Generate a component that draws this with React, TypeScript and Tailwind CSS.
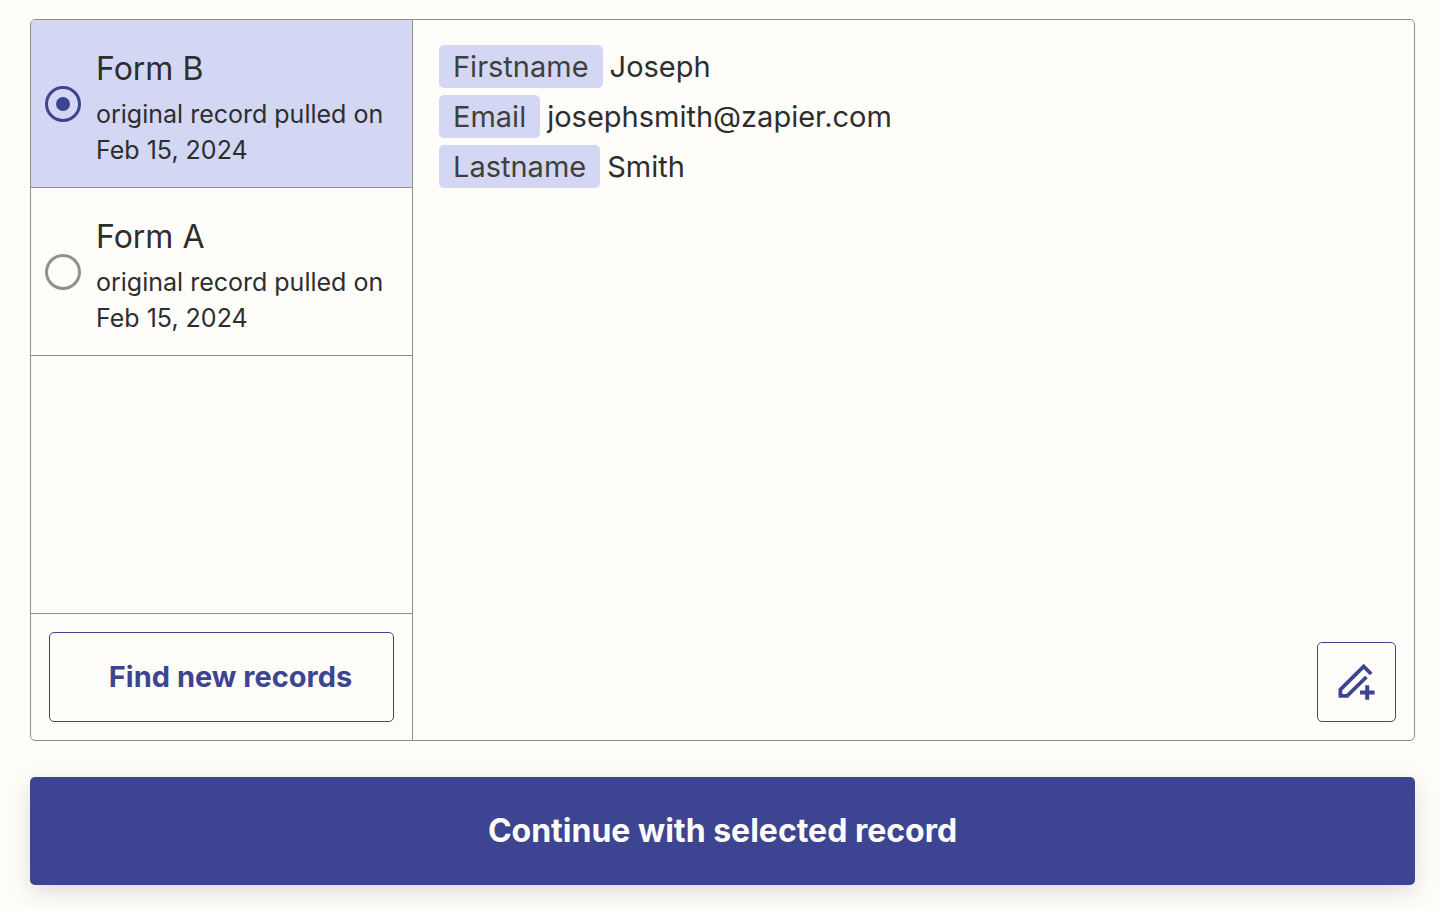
import { useState } from "react";

const records = [
  { id: "form-b", name: "Form B", note: "original record pulled on Feb 15, 2024" },
  { id: "form-a", name: "Form A", note: "original record pulled on Feb 15, 2024" },
];

const fields = [
  { label: "Firstname", value: "Joseph" },
  { label: "Email", value: "josephsmith@zapier.com" },
  { label: "Lastname", value: "Smith" },
];

function PencilPlusIcon() {
  return (
    <svg viewBox="0 0 40 40" className="size-10" fill="none" stroke="currentColor" strokeWidth="3.8" aria-hidden="true">
      <path d="M34.2 12 26.7 4.5 3.4 27.6v6.3h6.8L29.4 15" />
      <path d="M30.2 23.3v14.4M23 30.5h14.6" strokeWidth="4" />
    </svg>
  );
}

export default function App() {
  const [selected, setSelected] = useState("form-b");

  return (
    <main className="flex min-h-screen flex-col gap-9 bg-[#fffdf9] pt-[19px] pr-[25px] pb-[25px] pl-[30px] font-['Inter',sans-serif] text-[#2d2e2e]">
      <section className="flex flex-1 rounded-[5px] border border-[#919089]">
        <div className="flex w-[382px] shrink-0 flex-col border-r border-[#919089]">
          {records.map((record) => (
            <label
              key={record.id}
              className="flex cursor-pointer items-center gap-[15px] border-b border-[#919089] pr-5 pl-[14px] first:rounded-tl-[4px] has-checked:bg-[#d3d7f4]"
            >
              <input
                type="radio"
                name="record"
                value={record.id}
                checked={selected === record.id}
                onChange={() => setSelected(record.id)}
                className="grid size-9 shrink-0 appearance-none place-items-center rounded-full border-3 border-[#919191] before:size-[14px] before:rounded-full checked:border-[#3d4592] checked:before:bg-[#3d4592]"
              />
              <span className="flex flex-col gap-[3px] pt-[25px] pb-[19px]">
                <span className="text-[32px] leading-[48px]">{record.name}</span>
                <span className="text-[25px] leading-9">{record.note}</span>
              </span>
            </label>
          ))}
          <div className="mt-auto border-t border-[#919089] p-[18px]">
            <button
              type="button"
              className="h-[90px] w-full rounded-[5px] border border-[#3d4592] pl-[18px] text-[29px] font-bold text-[#3d4592]"
            >
              Find new records
            </button>
          </div>
        </div>
        <div className="flex flex-1 flex-col justify-between pt-[25px] pr-[18px] pb-[18px] pl-[26px]">
          <dl className="flex flex-col gap-[7px] text-[29px] leading-[43px]">
            {fields.map((field) => (
              <div key={field.label} className="flex gap-[7px]">
                <dt className="rounded-[5px] bg-[#d3d7f4] px-[14px] text-[#413f3b]">{field.label}</dt>
                <dd>{field.value}</dd>
              </div>
            ))}
          </dl>
          <button
            type="button"
            aria-label="Edit record"
            className="flex h-20 w-[79px] items-center justify-center self-end rounded-[5px] border border-[#3d4592] text-[#3d4592]"
          >
            <PencilPlusIcon />
          </button>
        </div>
      </section>
      <button
        type="button"
        className="h-[108px] rounded-[5px] bg-[#3d4592] text-[32px] font-bold text-[#fffdf9] shadow-[0_7px_22px_rgba(45,46,46,0.15)]"
      >
        Continue with selected record
      </button>
    </main>
  );
}
